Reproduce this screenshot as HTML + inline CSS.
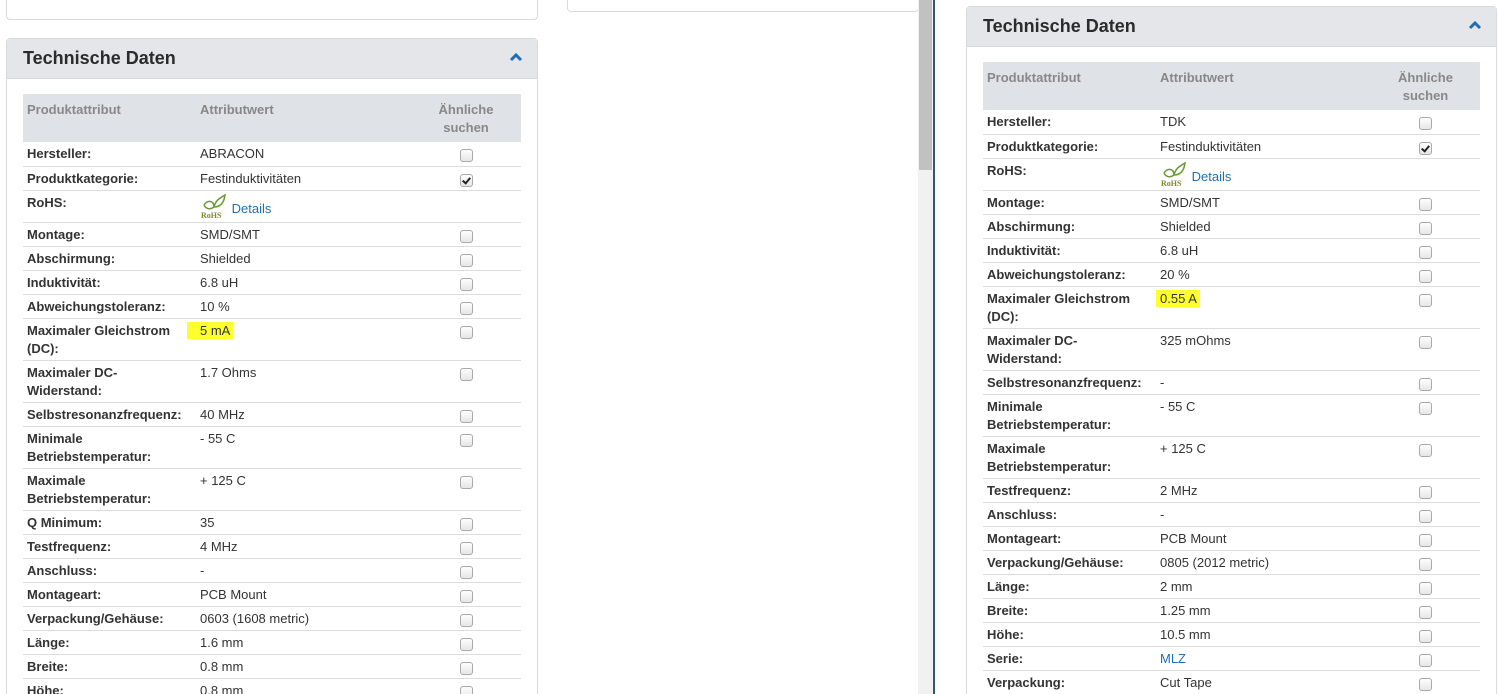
<!DOCTYPE html>
<html><head><meta charset="utf-8">
<style>
html,body{margin:0;padding:0}
body{background:#fff;font-family:"Liberation Sans",Arial,sans-serif;font-size:13px;color:#333}
#w{position:relative;width:1499px;height:694px;overflow:hidden}
.box{position:absolute;border:1px solid #d8dadd;border-radius:4px;background:#fff;box-sizing:border-box}
.hdr{height:40px;background:#e4e6ea;border-bottom:1px solid #d8dadd;box-sizing:border-box;font-weight:bold;font-size:18px;color:#2b2b2b;padding:9px 0 0 16px;position:relative}
.hdr .car{position:absolute;right:14px;top:13px;width:14px;height:10px}
table{position:absolute;border-collapse:collapse;table-layout:fixed}
thead td{background:#dfe2e7;color:#888;font-weight:bold;height:48px;vertical-align:top;padding:7px 4px 0 4px;line-height:18px;box-sizing:border-box}
thead td.c3{text-align:center}
tbody tr{height:24px}
tbody tr.d{height:42px}
tbody tr.r{height:32px}
tbody th,tbody td{text-align:left;vertical-align:top;padding:3px 4px 2px;line-height:18px;border-top:1px solid #dcdcdc;box-sizing:border-box}
tbody tr:first-child th,tbody tr:first-child td{border-top:none}
tbody th{font-weight:bold;color:#333}
tbody td.c3{text-align:center}
.cb{display:block;width:11px;height:11px;border:1px solid #a9a9a9;border-radius:3px;background:linear-gradient(#fdfdfd,#e6e6e6);margin:4px auto 0;position:relative}
.cb.on::after{content:"";position:absolute;left:3px;top:1px;width:3px;height:6px;border:solid #222;border-width:0 2px 2px 0;transform:rotate(40deg)}
.hl{background:#ffff2e;padding:1px 3px;margin-left:-13px;padding-left:13px}
a{color:#1f6fb5;text-decoration:none}
.rohs{display:inline-block;vertical-align:top;width:28px;height:26px;position:relative;top:-1px}
.rt{display:inline-block;margin-top:6px;vertical-align:top}
</style></head><body><div id="w">

<div class="box" style="left:6px;top:-10px;width:532px;height:30px"></div>
<div class="box" style="left:567px;top:-10px;width:352px;height:22px"></div>
<div style="position:absolute;left:918px;top:0;width:15px;height:694px;background:#f1f1f1"></div>
<div style="position:absolute;left:919px;top:0;width:13px;height:170px;background:#c1c1c1"></div>
<div style="position:absolute;left:933px;top:0;width:2px;height:694px;background:#2e5e63"></div>

<div class="box" style="left:6px;top:38px;width:532px;height:700px">
<div class="hdr">Technische Daten<svg class="car" viewBox="0 0 14 10"><path d="M2 8 L7 3 L12 8" stroke="#1f6fb5" stroke-width="3" fill="none"/></svg></div>
</div>
<table style="left:23px;top:94px;width:498px">
<colgroup><col style="width:173px"><col style="width:215px"><col style="width:110px"></colgroup>
<thead><tr><td>Produktattribut</td><td>Attributwert</td><td class="c3">Ähnliche<br>suchen</td></tr></thead>
<tbody>
<tr><th>Hersteller:</th><td>ABRACON</td><td class="c3"><i class="cb"></i></td></tr>
<tr><th>Produktkategorie:</th><td>Festinduktivitäten</td><td class="c3"><i class="cb on"></i></td></tr>
<tr class="r"><th>RoHS:</th><td><svg class="rohs" viewBox="0 0 28 26"><path d="M4 12 C8 6 14 8 14 14 M14 14 C16 6 22 4 25 2 C24 10 20 14 14 14 M4 12 C6 16 10 17 14 14" stroke="#6a9a3a" stroke-width="1.5" fill="none"/><text x="1" y="25" font-size="8" font-weight="bold" fill="#7a8a2a" font-family="Liberation Serif">RoHS</text></svg> <a class="rt">Details</a></td><td></td></tr>
<tr><th>Montage:</th><td>SMD/SMT</td><td class="c3"><i class="cb"></i></td></tr>
<tr><th>Abschirmung:</th><td>Shielded</td><td class="c3"><i class="cb"></i></td></tr>
<tr><th>Induktivität:</th><td>6.8 uH</td><td class="c3"><i class="cb"></i></td></tr>
<tr><th>Abweichungstoleranz:</th><td>10 %</td><td class="c3"><i class="cb"></i></td></tr>
<tr class="d"><th>Maximaler Gleichstrom (DC):</th><td><span class="hl">5 mA</span></td><td class="c3"><i class="cb"></i></td></tr>
<tr class="d"><th>Maximaler DC-Widerstand:</th><td>1.7 Ohms</td><td class="c3"><i class="cb"></i></td></tr>
<tr><th>Selbstresonanzfrequenz:</th><td>40 MHz</td><td class="c3"><i class="cb"></i></td></tr>
<tr class="d"><th>Minimale Betriebstemperatur:</th><td>- 55 C</td><td class="c3"><i class="cb"></i></td></tr>
<tr class="d"><th>Maximale Betriebstemperatur:</th><td>+ 125 C</td><td class="c3"><i class="cb"></i></td></tr>
<tr><th>Q Minimum:</th><td>35</td><td class="c3"><i class="cb"></i></td></tr>
<tr><th>Testfrequenz:</th><td>4 MHz</td><td class="c3"><i class="cb"></i></td></tr>
<tr><th>Anschluss:</th><td>-</td><td class="c3"><i class="cb"></i></td></tr>
<tr><th>Montageart:</th><td>PCB Mount</td><td class="c3"><i class="cb"></i></td></tr>
<tr><th>Verpackung/Gehäuse:</th><td>0603 (1608 metric)</td><td class="c3"><i class="cb"></i></td></tr>
<tr><th>Länge:</th><td>1.6 mm</td><td class="c3"><i class="cb"></i></td></tr>
<tr><th>Breite:</th><td>0.8 mm</td><td class="c3"><i class="cb"></i></td></tr>
<tr><th>Höhe:</th><td>0.8 mm</td><td class="c3"><i class="cb"></i></td></tr>
</tbody></table>

<div class="box" style="left:966px;top:6px;width:531px;height:700px">
<div class="hdr">Technische Daten<svg class="car" viewBox="0 0 14 10"><path d="M2 8 L7 3 L12 8" stroke="#1f6fb5" stroke-width="3" fill="none"/></svg></div>
</div>
<table style="left:983px;top:62px;width:497px">
<colgroup><col style="width:173px"><col style="width:215px"><col style="width:109px"></colgroup>
<thead><tr><td>Produktattribut</td><td>Attributwert</td><td class="c3">Ähnliche<br>suchen</td></tr></thead>
<tbody>
<tr><th>Hersteller:</th><td>TDK</td><td class="c3"><i class="cb"></i></td></tr>
<tr><th>Produktkategorie:</th><td>Festinduktivitäten</td><td class="c3"><i class="cb on"></i></td></tr>
<tr class="r"><th>RoHS:</th><td><svg class="rohs" viewBox="0 0 28 26"><path d="M4 12 C8 6 14 8 14 14 M14 14 C16 6 22 4 25 2 C24 10 20 14 14 14 M4 12 C6 16 10 17 14 14" stroke="#6a9a3a" stroke-width="1.5" fill="none"/><text x="1" y="25" font-size="8" font-weight="bold" fill="#7a8a2a" font-family="Liberation Serif">RoHS</text></svg> <a class="rt">Details</a></td><td></td></tr>
<tr><th>Montage:</th><td>SMD/SMT</td><td class="c3"><i class="cb"></i></td></tr>
<tr><th>Abschirmung:</th><td>Shielded</td><td class="c3"><i class="cb"></i></td></tr>
<tr><th>Induktivität:</th><td>6.8 uH</td><td class="c3"><i class="cb"></i></td></tr>
<tr><th>Abweichungstoleranz:</th><td>20 %</td><td class="c3"><i class="cb"></i></td></tr>
<tr class="d"><th>Maximaler Gleichstrom (DC):</th><td><span class="hl" style="margin-left:-4px;padding-left:4px">0.55 A</span></td><td class="c3"><i class="cb"></i></td></tr>
<tr class="d"><th>Maximaler DC-Widerstand:</th><td>325 mOhms</td><td class="c3"><i class="cb"></i></td></tr>
<tr><th>Selbstresonanzfrequenz:</th><td>-</td><td class="c3"><i class="cb"></i></td></tr>
<tr class="d"><th>Minimale Betriebstemperatur:</th><td>- 55 C</td><td class="c3"><i class="cb"></i></td></tr>
<tr class="d"><th>Maximale Betriebstemperatur:</th><td>+ 125 C</td><td class="c3"><i class="cb"></i></td></tr>
<tr><th>Testfrequenz:</th><td>2 MHz</td><td class="c3"><i class="cb"></i></td></tr>
<tr><th>Anschluss:</th><td>-</td><td class="c3"><i class="cb"></i></td></tr>
<tr><th>Montageart:</th><td>PCB Mount</td><td class="c3"><i class="cb"></i></td></tr>
<tr><th>Verpackung/Gehäuse:</th><td>0805 (2012 metric)</td><td class="c3"><i class="cb"></i></td></tr>
<tr><th>Länge:</th><td>2 mm</td><td class="c3"><i class="cb"></i></td></tr>
<tr><th>Breite:</th><td>1.25 mm</td><td class="c3"><i class="cb"></i></td></tr>
<tr><th>Höhe:</th><td>10.5 mm</td><td class="c3"><i class="cb"></i></td></tr>
<tr><th>Serie:</th><td><a>MLZ</a></td><td class="c3"><i class="cb"></i></td></tr>
<tr><th>Verpackung:</th><td>Cut Tape</td><td class="c3"><i class="cb"></i></td></tr>
</tbody></table>
</div></body></html>
